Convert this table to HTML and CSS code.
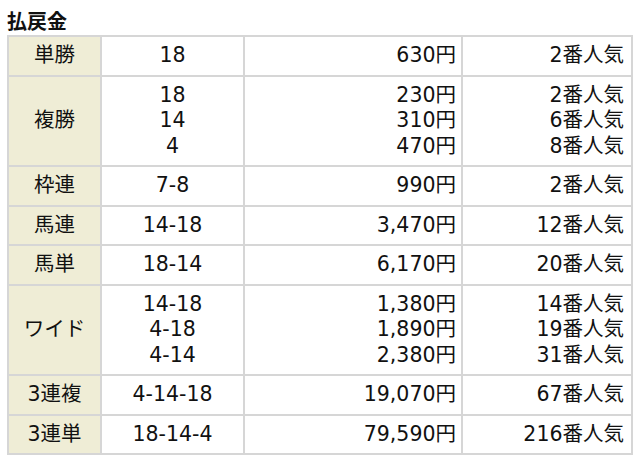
FILE: index.html
```html
<!DOCTYPE html>
<html lang="ja">
<head>
<meta charset="utf-8">
<link rel="stylesheet" href="styles.css">
</head>
<body>
<h2 class="title">払戻金</h2>
<table class="pay">
  <colgroup>
    <col class="c1"><col class="c2"><col class="c3"><col class="c4">
  </colgroup>
  <tr><th>単勝</th><td class="num">18</td><td class="yen">630円</td><td class="pop">2番人気</td></tr>
  <tr><th>複勝</th><td class="num">18<br>14<br>4</td><td class="yen">230円<br>310円<br>470円</td><td class="pop">2番人気<br>6番人気<br>8番人気</td></tr>
  <tr><th>枠連</th><td class="num">7-8</td><td class="yen">990円</td><td class="pop">2番人気</td></tr>
  <tr><th>馬連</th><td class="num">14-18</td><td class="yen">3,470円</td><td class="pop">12番人気</td></tr>
  <tr><th>馬単</th><td class="num">18-14</td><td class="yen">6,170円</td><td class="pop">20番人気</td></tr>
  <tr><th>ワイド</th><td class="num">14-18<br>4-18<br>4-14</td><td class="yen">1,380円<br>1,890円<br>2,380円</td><td class="pop">14番人気<br>19番人気<br>31番人気</td></tr>
  <tr><th>3連複</th><td class="num">4-14-18</td><td class="yen">19,070円</td><td class="pop">67番人気</td></tr>
  <tr><th>3連単</th><td class="num">18-14-4</td><td class="yen">79,590円</td><td class="pop">216番人気</td></tr>
</table>
</body>
</html>
```
FILE: styles.css
```css
html, body {
  margin: 0;
  padding: 0;
  background: #fff;
}
body {
  padding: 8px 7px 0;
  font-family: "DejaVu Sans", "Noto Sans CJK JP", sans-serif;
  color: #111;
}
.title {
  margin: 0 0 2px;
  font-family: "Noto Sans CJK JP", sans-serif;
  font-size: 20px;
  line-height: 25px;
  font-weight: bold;
}
.pay {
  border-collapse: collapse;
  width: 624px;
  table-layout: fixed;
  font-size: 20.5px;
}
.c1 { width: 93px; }
.c2 { width: 143px; }
.c3 { width: 218px; }
.c4 { width: 170px; }
.pay th, .pay td {
  border: 2px solid #d6d6d6;
  padding: 6px 5px 6px;
  line-height: 25.5px;
  font-weight: normal;
  vertical-align: middle;
}
.pay td.pop { padding-right: 7px; }
.pay th {
  background: #efedd6;
  text-align: center;
}
.num { text-align: center; }
.yen { text-align: right; }
.pop { text-align: right; }
```
